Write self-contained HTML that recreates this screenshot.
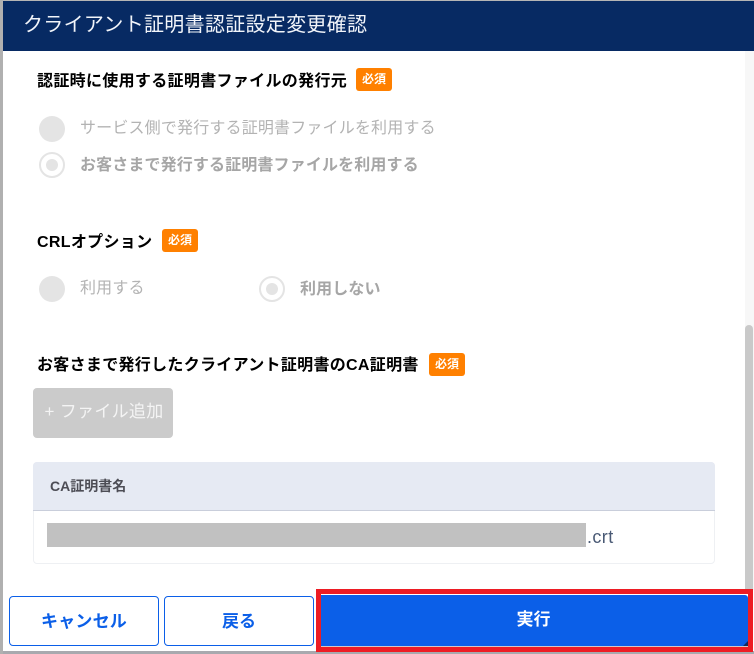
<!DOCTYPE html>
<html lang="ja">
<head>
<meta charset="utf-8">
<style>
html,body{margin:0;padding:0}
body{width:754px;height:654px;overflow:hidden;background:#a8a9ae;position:relative;font-family:"Liberation Sans","Noto Sans CJK JP",sans-serif}
.abs,.abs *{box-sizing:border-box}
.abs{position:absolute;white-space:nowrap}
.lbl{font-size:16px;line-height:24px;font-weight:700;color:#000;letter-spacing:.32px}
.req{width:36px;height:23px;background:#ff8000;border-radius:3px;color:#fff;font-size:12px;font-weight:700;line-height:23px;text-align:center}
.r{width:26px;height:26px;border-radius:50%;background:#e4e4e4}
.rc{width:26px;height:26px;border-radius:50%;background:#fff;border:2px solid #e4e4e4}
.rc i{position:absolute;left:5px;top:5px;width:12px;height:12px;border-radius:50%;background:#e4e4e4}
.t{font-size:16px;line-height:24px;color:#b3b3b3;letter-spacing:.17px}
.tb{font-size:16px;line-height:24px;color:#a6a6a6;font-weight:700;letter-spacing:.13px}
.btn{height:50px;top:596px;background:#fff;border:1px solid #0b5fe8;border-radius:4px;color:#0b5fe8;font-size:17px;font-weight:700;line-height:49px;text-align:center}
</style>
</head>
<body>
<div class="abs" style="left:0;top:0;width:754px;height:1px;background:#b5b5b5"></div>
<div class="abs" style="left:0;top:0;width:3px;height:654px;background:#b0b0b0"></div>
<div class="abs" style="left:3px;top:1px;width:751px;height:650px;background:#fff"></div>
<div class="abs" style="left:3px;top:1px;width:751px;height:50px;background:#072a63;color:#f2f5fa;font-size:20px;line-height:49px;padding-left:20px;letter-spacing:.3px">クライアント証明書認証設定変更確認</div>
<div class="abs" style="left:745px;top:51px;width:9px;height:539px;background:#f7f7f7"></div>
<div class="abs" style="left:745px;top:325px;width:8px;height:265px;background:#c9c9c9;border-radius:4px 4px 0 0"></div>

<div class="abs lbl" style="left:37px;top:70px">認証時に使用する証明書ファイルの発行元</div>
<div class="abs req" style="left:356px;top:68px">必須</div>
<div class="abs r" style="left:39px;top:116px"></div>
<div class="abs t" style="left:80px;top:117px">サービス側で発行する証明書ファイルを利用する</div>
<div class="abs rc" style="left:39px;top:152px"><i></i></div>
<div class="abs tb" style="left:80px;top:154px">お客さまで発行する証明書ファイルを利用する</div>

<div class="abs lbl" style="left:37px;top:231px">CRLオプション</div>
<div class="abs req" style="left:162px;top:229px">必須</div>
<div class="abs r" style="left:39px;top:276px"></div>
<div class="abs t" style="left:80px;top:277px">利用する</div>
<div class="abs rc" style="left:259px;top:276px"><i></i></div>
<div class="abs tb" style="left:300px;top:278px">利用しない</div>

<div class="abs lbl" style="left:37px;top:354px;letter-spacing:.3px">お客さまで発行したクライアント証明書のCA証明書</div>
<div class="abs req" style="left:429px;top:353px">必須</div>
<div class="abs" style="left:33px;top:388px;width:140px;height:50px;background:#cbcbcb;border-radius:4px;color:#f4f4f4;font-size:17px;line-height:47px;text-align:center;letter-spacing:.3px;padding-left:2px">+ ファイル追加</div>

<div class="abs" style="left:33px;top:462px;width:682px;height:102px;background:#fff;border:1px solid #eef0f3;border-radius:4px"></div>
<div class="abs" style="left:33px;top:462px;width:682px;height:49px;background:#e6eaf3;border-bottom:1px solid #c9cedb;border-radius:4px 4px 0 0;color:#4d4d55;font-size:14px;font-weight:700;line-height:48px;padding-left:17px">CA証明書名</div>
<div class="abs" style="left:47px;top:523px;width:539px;height:24px;background:#c1c1c1"></div>
<div class="abs" style="left:587px;top:525px;font-size:18px;line-height:24px;color:#4a5a75;letter-spacing:.4px">.crt</div>

<div class="abs btn" style="left:9px;width:150px;letter-spacing:.2px">キャンセル</div>
<div class="abs btn" style="left:164px;width:150px">戻る</div>
<div class="abs" style="left:316px;top:589px;width:437px;height:63px;border:5px solid #ed1c24;background:#fff"></div>
<div class="abs" style="left:321px;top:595px;width:427px;height:51px;background:#0b5fe8;border-radius:0 3px 3px 0;color:#fff;font-size:17px;font-weight:700;line-height:50px;text-align:center;padding-right:2px">実行</div>
<div class="abs" style="left:743px;top:641px;width:0;height:0;border-style:solid;border-width:0 0 5px 5px;border-color:transparent transparent #14285c transparent"></div>
<div class="abs" style="left:321px;top:646px;width:427px;height:1px;background:#d3c6c6"></div>
</body>
</html>
